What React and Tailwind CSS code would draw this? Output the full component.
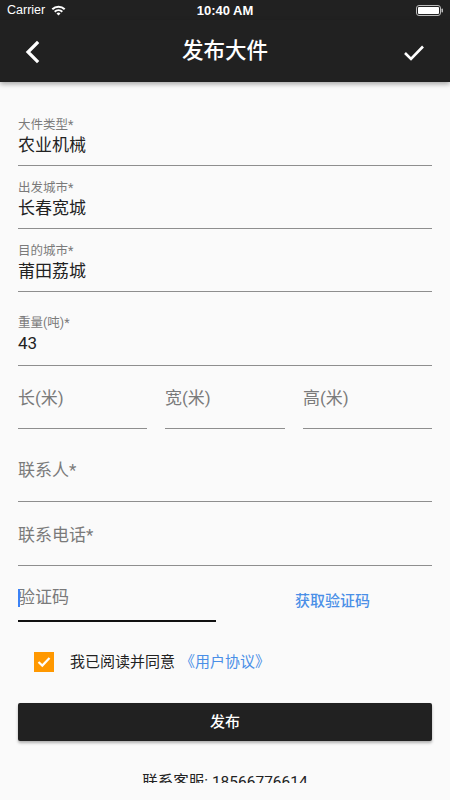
import React from "react";

const font = { fontFamily: '"Roboto", "Noto Sans CJK SC", sans-serif' };

function Field({ label, value, mt, pb }) {
  return (
    <div className={`mx-[18px] border-b border-[#8e8e8e] ${mt} ${pb}`}>
      <div className="text-[12.5px] leading-[16px] text-[#7a7a7a]">{label}</div>
      <div className="text-[17px] leading-[24px] text-[#222]">{value}</div>
    </div>
  );
}

function Placeholder({ text, mt, pb, className = "" }) {
  return (
    <div className={`border-b border-[#8e8e8e] ${mt} ${pb} ${className}`}>
      <div className="text-[17px] leading-[24px] text-[#7a7a7a]">{text}</div>
    </div>
  );
}

export default function App() {
  return (
    <div className="w-[450px] h-[800px] bg-[#fafafa] flex flex-col overflow-hidden" style={font}>
      {/* status bar */}
      <div className="h-[20px] bg-[#212121] flex items-center justify-between px-[7px] text-white relative">
        <div className="flex items-center gap-[6px]">
          <span className="text-[12.5px] leading-none" style={{ fontFamily: '"Liberation Sans", sans-serif' }}>Carrier</span>
          <svg width="15" height="11" viewBox="0 0 15 11">
            <path d="M0.6 3.6 A10 10 0 0 1 14.4 3.6 L13 5 A8 8 0 0 0 2 5 Z" fill="white" />
            <path d="M3 6 A6.6 6.6 0 0 1 12 6 L10.6 7.4 A4.6 4.6 0 0 0 4.4 7.4 Z" fill="white" />
            <path d="M5.5 8.5 A3 3 0 0 1 9.5 8.5 L7.5 10.6 Z" fill="white" />
          </svg>
        </div>
        <span className="absolute left-1/2 -translate-x-1/2 text-[13px] font-semibold leading-none" style={{ fontFamily: '"Liberation Sans", sans-serif' }}>10:40 AM</span>
        <svg width="27" height="11" viewBox="0 0 27 11">
          <rect x="0.5" y="0.5" width="24" height="10" rx="2.5" fill="none" stroke="#bbb" strokeWidth="1" />
          <rect x="2" y="2" width="21" height="7" rx="1" fill="white" />
          <rect x="25.5" y="3.5" width="1.5" height="4" rx="0.7" fill="#bbb" />
        </svg>
      </div>

      {/* header */}
      <div className="h-[62px] bg-[#212121] flex items-center justify-between shadow-[0_2px_5px_rgba(0,0,0,0.35)] relative z-10">
        <svg width="60" height="62" viewBox="0 0 60 62">
          <path d="M37 23 L28 32 L37 41" fill="none" stroke="white" strokeWidth="3.2" strokeLinecap="square" />
        </svg>
        <div className="text-white text-[21.5px] leading-none font-medium">发布大件</div>
        <svg width="60" height="62" viewBox="0 0 60 62">
          <path d="M15 33 L21 39 L33 26.5" fill="none" stroke="white" strokeWidth="2.6" />
        </svg>
      </div>

      {/* content */}
      <div className="h-[701px] overflow-hidden flex flex-col">
        <Field label="大件类型*" value="农业机械" mt="mt-[35px]" pb="pb-[8px]" />
        <Field label="出发城市*" value="长春宽城" mt="mt-[14px]" pb="pb-[8px]" />
        <Field label="目的城市*" value="莆田荔城" mt="mt-[14px]" pb="pb-[8px]" />
        <Field label="重量(吨)*" value="43" mt="mt-[23px]" pb="pb-[10px]" />

        <div className="mx-[18px] flex gap-[18px]">
          <Placeholder text="长(米)" mt="mt-[20px]" pb="pb-[18px]" className="w-[129px]" />
          <Placeholder text="宽(米)" mt="mt-[20px]" pb="pb-[18px]" className="w-[120px]" />
          <Placeholder text="高(米)" mt="mt-[20px]" pb="pb-[18px]" className="flex-1" />
        </div>

        <Placeholder text="联系人*" mt="mt-[29px]" pb="pb-[19px]" className="mx-[18px]" />
        <Placeholder text="联系电话*" mt="mt-[21px]" pb="pb-[18px]" className="mx-[18px]" />

        <div className="mx-[18px] flex items-end">
          <div className="w-[198px] border-b-2 border-[#111] mt-[19px] pb-[11px] relative">
            <div className="text-[17px] leading-[24px] text-[#7a7a7a]">验证码</div>
            <div className="absolute left-0 top-[4px] w-[2px] h-[18px] bg-[#3b82f6]" />
          </div>
          <div className="flex-1 pl-[79px] pb-[11px] text-[15px] leading-[20px] font-medium text-[#4a8fe7]">获取验证码</div>
        </div>

        <div className="flex items-center mt-[30px] ml-[34px]">
          <div className="w-[20px] h-[20px] bg-[#ff9800] flex items-center justify-center">
            <svg width="14" height="12" viewBox="0 0 14 12">
              <path d="M1.5 6 L5.3 9.6 L12.5 2" fill="none" stroke="white" strokeWidth="2.2" />
            </svg>
          </div>
          <span className="ml-[16px] text-[15px] leading-[20px] text-[#222]">我已阅读并同意</span>
          <span className="ml-[5px] text-[15px] leading-[20px] text-[#4a8fe7]">《用户协议》</span>
        </div>

        <button className="mx-[18px] mt-[31px] h-[38px] bg-[#212121] rounded-[2px] shadow-[0_2px_3px_rgba(0,0,0,0.3)] text-white text-[15px] font-medium shrink-0">
          发布
        </button>

        <div className="mt-[29px] text-center text-[15.5px] leading-[24px] text-[#222] shrink-0">联系客服: 18566776614</div>
      </div>
    </div>
  );
}
